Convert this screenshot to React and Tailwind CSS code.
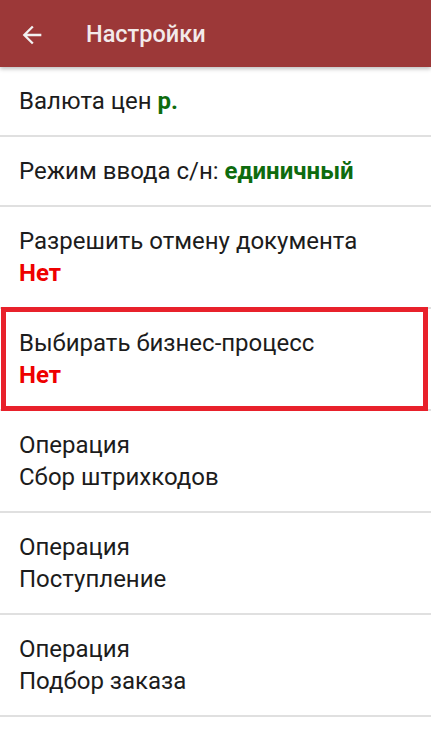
const font = { fontFamily: 'Roboto, "Noto Sans", sans-serif' };

function Row({ children, tall, highlight }) {
  return (
    <div className="relative border-b-2 border-[#e0e0e0]">
      <div className={`flex flex-col justify-center px-[19px] text-[24px] leading-[32px] text-[#1c1c1c] ${tall ? 'h-[100px]' : 'h-[68px]'}`}>
        {children}
      </div>
      {highlight && (
        <div className="absolute left-[1px] right-[3px] -top-[2px] -bottom-[2px] border-[5px] border-[#e8212b]" />
      )}
    </div>
  );
}

export default function App() {
  return (
    <div className="w-[431px] h-[739px] bg-white overflow-hidden" style={font}>
      {/* toolbar */}
      <div className="relative z-10 h-[67px] bg-[#9c3838] flex items-center pt-[3px] shadow-[0_2px_4px_rgba(0,0,0,0.25)]">
        <svg viewBox="0 0 24 24" className="ml-[18px] w-[28px] h-[28px]" fill="#f1f1f1">
          <path d="M20 11H7.83l5.59-5.59L12 4l-8 8 8 8 1.41-1.41L7.83 13H20v-2z" />
        </svg>
        <span className="ml-[40px] text-[23.5px] font-medium text-[#f3eaea]">Настройки</span>
      </div>

      <Row>
        <div>Валюта цен <span className="font-bold text-[#0e6b0e]">р.</span></div>
      </Row>
      <Row>
        <div>Режим ввода с/н: <span className="font-bold text-[#0e6b0e]">единичный</span></div>
      </Row>
      <Row tall>
        <div>Разрешить отмену документа</div>
        <div className="font-bold text-[#ee0000]">Нет</div>
      </Row>
      <Row tall highlight>
        <div>Выбирать бизнес-процесс</div>
        <div className="font-bold text-[#ee0000]">Нет</div>
      </Row>
      <Row tall>
        <div>Операция</div>
        <div>Сбор штрихкодов</div>
      </Row>
      <Row tall>
        <div>Операция</div>
        <div>Поступление</div>
      </Row>
      <Row tall>
        <div>Операция</div>
        <div>Подбор заказа</div>
      </Row>
    </div>
  );
}
